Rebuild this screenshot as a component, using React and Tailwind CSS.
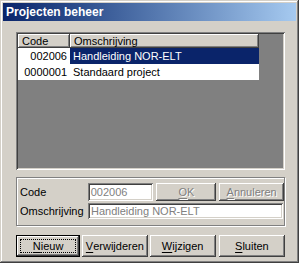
import React from "react";

// classic win2000 bevels
const raised = "shadow-[inset_-1px_-1px_#404040,inset_1px_1px_#ffffff,inset_-2px_-2px_#808080]";
const sunken = "shadow-[inset_1px_1px_#808080,inset_-1px_-1px_#ffffff,inset_2px_2px_#404040,inset_-2px_-2px_#d4d0c8]";

function Btn({ children, isDefault, disabled, className = "" }) {
  if (isDefault) {
    return (
      <div className={`border border-black bg-[#d4d0c8] p-0 ${className}`}>
        <div className={`h-full ${raised} p-[3px]`}>
          <div className="h-full border border-dotted border-black flex items-center justify-center">
            {children}
          </div>
        </div>
      </div>
    );
  }
  return (
    <div
      className={`bg-[#d4d0c8] ${raised} flex items-center justify-center ${
        disabled ? "text-[#808080] [text-shadow:1px_1px_#ffffff]" : "text-black"
      } ${className}`}
    >
      {children}
    </div>
  );
}

function U({ children }) {
  return <span className="underline underline-offset-[2px]">{children}</span>;
}

export default function App() {
  const rows = [
    { code: "002006", name: "Handleiding NOR-ELT", selected: true },
    { code: "0000001", name: "Standaard project", selected: false },
  ];

  return (
    <div className="w-[299px] h-[263px] bg-[#d4d0c8] font-['Liberation_Sans',Arial,sans-serif] text-[11px] text-black leading-none p-[3px] shadow-[inset_-1px_-1px_#404040,inset_1px_1px_#d4d0c8,inset_-2px_-2px_#808080,inset_2px_2px_#ffffff] overflow-hidden">
      {/* title bar */}
      <div className="h-[18px] bg-gradient-to-r from-[#0a246a] to-[#a6caf0] text-white font-bold text-[12px] flex items-center pl-[3px]">
        Projecten beheer
      </div>

      <div className="pl-[13px]">
        {/* list view */}
        <div className={`mt-[11px] w-[269px] h-[138px] bg-[#808080] ${sunken} p-[2px]`}>
          <div className="flex h-[14px]">
            <div className={`w-[52px] bg-[#d4d0c8] ${raised} pl-[4px] flex items-center`}>Code</div>
            <div className={`w-[189px] bg-[#d4d0c8] ${raised} pl-[4px] flex items-center`}>Omschrijving</div>
          </div>
          {rows.map((r) => (
            <div key={r.code} className="flex h-[16px]">
              <div className="w-[52px] bg-white flex items-center justify-end pr-[3px]">{r.code}</div>
              <div
                className={`w-[189px] flex items-center pl-[3px] ${
                  r.selected ? "bg-[#0a246a] text-white" : "bg-white"
                }`}
              >
                {r.name}
              </div>
            </div>
          ))}
        </div>

        {/* group box */}
        <div className="mt-[7px] w-[269px] h-[49px] border border-[#808080] shadow-[inset_1px_1px_#ffffff,1px_1px_#ffffff] pl-[3px] pt-[5px]">
          <div className="flex items-center h-[18px]">
            <div className="w-[68px]">Code</div>
            <div className={`w-[66px] h-[18px] bg-white ${sunken} flex items-center pl-[3px] text-[#808080]`}>002006</div>
            <Btn disabled className="ml-[3px] w-[60px] h-[18px]">
              <U>O</U>K
            </Btn>
            <Btn disabled className="ml-[3px] w-[65px] h-[18px]">
              <U>A</U>nnuleren
            </Btn>
          </div>
          <div className="flex items-center h-[16px] mt-[2px]">
            <div className="w-[68px]">Omschrijving</div>
            <div className={`w-[195px] h-[16px] bg-white ${sunken} flex items-center pl-[3px] text-[#808080]`}>
              Handleiding NOR-ELT
            </div>
          </div>
        </div>

        {/* buttons */}
        <div className="mt-[9px] flex gap-[2px] w-[269px]">
          <Btn isDefault className="w-[65px] h-[22px]">
            <U>N</U>ieuw
          </Btn>
          <Btn className="w-[66px] h-[22px]">
            <U>V</U>erwijderen
          </Btn>
          <Btn className="w-[67px] h-[22px]">
            <U>W</U>ijzigen
          </Btn>
          <Btn className="ml-[1px] w-[67px] h-[22px]">
            <U>S</U>luiten
          </Btn>
        </div>
      </div>
    </div>
  );
}
